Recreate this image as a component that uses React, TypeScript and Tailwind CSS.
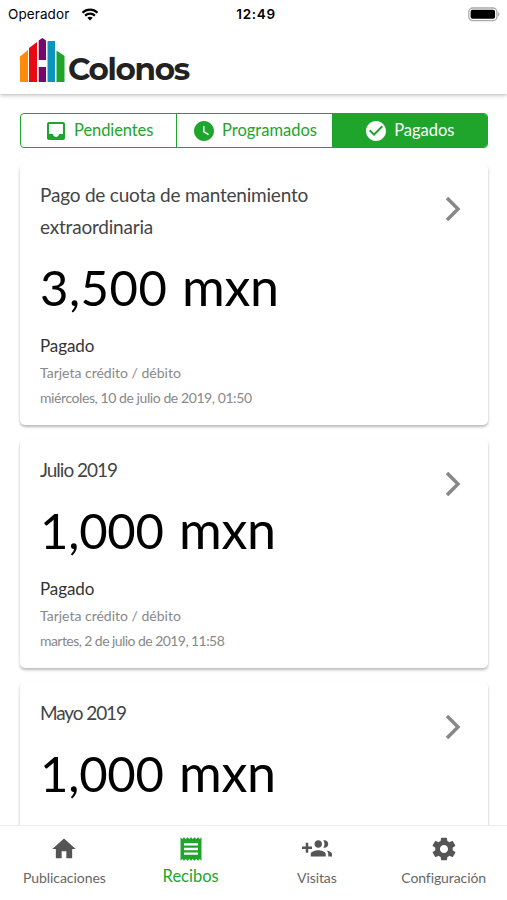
import React from "react";
import {
  MdCheckCircle,
  MdHome,
  MdInbox,
  MdReceipt,
  MdWatchLater,
} from "react-icons/md";
import { IoMdSettings } from "react-icons/io";

type Receipt = {
  title: string;
  titleClass: string;
  amount: string;
  amountClass: string;
  date?: string;
  dateClass?: string;
};

const receipts: Receipt[] = [
  {
    title: "Pago de cuota de mantenimiento extraordinaria",
    titleClass: "tracking-[-0.2px]",
    amount: "3,500",
    amountClass: "w-[142px] tracking-[0.5px]",
    date: "miércoles, 10 de julio de 2019, 01:50",
    dateClass: "tracking-[-0.42px]",
  },
  {
    title: "Julio 2019",
    titleClass: "tracking-[-1px]",
    amount: "1,000",
    amountClass: "w-[139px] tracking-[-0.2px]",
    date: "martes, 2 de julio de 2019, 11:58",
    dateClass: "tracking-[-0.56px]",
  },
  {
    title: "Mayo 2019",
    titleClass: "tracking-[-1.1px]",
    amount: "1,000",
    amountClass: "w-[139px] tracking-[-0.2px]",
  },
];

function StatusBar() {
  return (
    <div className="grid h-7 grid-cols-3 items-center pl-2 pr-[7px] text-black">
      <div className="flex items-center gap-[7px] font-[Inter,sans-serif] text-[13.5px]">
        <span className="w-[66px] tracking-[0.1px]">Operador</span>
        <svg width="18" height="13" viewBox="0 0 17 13" fill="none" stroke="black" strokeWidth="2.2">
          <path d="M1 4.7C5.2.5 11.8.5 16 4.7" />
          <path d="M3.6 7.6c2.8-2.7 7-2.7 9.8 0" />
          <path d="M8.5 12.5 5.8 9.8c1.5-1.3 3.9-1.3 5.4 0z" fill="black" stroke="none" />
        </svg>
      </div>
      <span className="pl-1 text-center font-[Inter,sans-serif] text-[13.5px] font-semibold tracking-[0.7px]">
        12:49
      </span>
      <svg className="justify-self-end" width="32" height="15" viewBox="0 0 33 15">
        <rect x="0.8" y="0.8" width="29" height="13" rx="4" fill="white" stroke="#aaa" strokeWidth="1.3" />
        <rect x="2.7" y="2.7" width="25.2" height="9.2" rx="2" />
        <path d="M31 5v4.5c2-.8 2-3.7 0-4.5z" fill="#aaa" />
      </svg>
    </div>
  );
}

function Logo() {
  return (
    <div className="flex items-end">
      <svg width="45" height="44" viewBox="0 0 45 44">
        <path d="M0 18.5 8 12v32H0z" fill="#ff8a0c" />
        <path d="M9 10 17 4v40H9z" fill="#e90912" />
        <path d="M18.7 2.5 22.3 0 26 2.5V22h-7.3zM18.7 29H26v15h-7.3z" fill="#77066d" />
        <path d="M27.5 3H35v41h-7.5z" fill="#0c94bd" />
        <path d="M36.5 12.5 44.5 18v26h-8z" fill="#20a52c" />
      </svg>
      <span className="-mb-0.5 ml-[3px] font-[Montserrat,Inter,sans-serif] text-[31px] font-bold leading-[30px] tracking-[-1.3px] text-[#222]">
        Colonos
      </span>
    </div>
  );
}

function Filters() {
  return (
    <div className="grid h-[35px] shrink-0 grid-cols-3 overflow-hidden rounded-[4px] border border-[#20a52c] text-[16.5px] text-[#20a52c]">
      <button className="flex items-center justify-center gap-1.5">
        <MdInbox size={24} />
        <span className="pb-px tracking-[-0.1px]">Pendientes</span>
      </button>
      <button className="flex items-center justify-center gap-1.5 border-l border-[#20a52c]">
        <MdWatchLater size={24} />
        <span className="pb-px">Programados</span>
      </button>
      <button className="flex items-center justify-center gap-1.5 bg-[#20a52c] text-white">
        <MdCheckCircle size={24} />
        <span className="pb-px">Pagados</span>
      </button>
    </div>
  );
}

function ReceiptCard({ title, titleClass, amount, amountClass, date, dateClass }: Receipt) {
  return (
    <article className="flex min-h-[229px] shrink-0 justify-between rounded-[5px] bg-white px-5 pb-[15px] pt-[15px] shadow-[0_2px_3px_rgba(0,0,0,0.28)]">
      <div>
        <h2 className={`w-[300px] text-[19px] leading-8 text-[#444] ${titleClass}`}>{title}</h2>
        <p className="mt-2 flex h-[72px] items-baseline whitespace-nowrap text-[49px] leading-[70px] text-black">
          <span className={amountClass}>{amount}</span>
          <span className="text-[52px] tracking-[-0.3px]">mxn</span>
        </p>
        {date && (
          <>
            <p className="mt-[9px] text-[17px] leading-7 tracking-[-0.1px] text-[#333]">Pagado</p>
            <p className="text-[14px] leading-[25px] text-[#888]">Tarjeta crédito / débito</p>
            <p className={`text-[14px] leading-[25px] text-[#888] ${dateClass}`}>{date}</p>
          </>
        )}
      </div>
      <svg className="mr-[7px] mt-[17px]" width="16" height="26" viewBox="0 0 16 26" fill="none" stroke="#888" strokeWidth="3.5">
        <path d="m2 2 11 11L2 24" />
      </svg>
    </article>
  );
}

function TabBar() {
  return (
    <nav className="z-10 grid h-[75px] shrink-0 grid-cols-4 border-t border-[#eee] bg-white text-[14px] text-[#666]">
      <a className="flex flex-col items-center pl-0.5 pt-[9px]">
        <MdHome size={28} className="text-[#555]" />
        <span className="mt-1 tracking-[-0.05px]">Publicaciones</span>
      </a>
      <a className="flex flex-col items-center pl-px pt-[9px] text-[16.5px] text-[#20a52c]">
        <MdReceipt size={28} />
        <span className="mt-px">Recibos</span>
      </a>
      <a className="flex flex-col items-center pt-[8px]">
        <svg className="text-[#555]" width="30" height="30" viewBox="0 0 24 24" fill="currentColor">
          <path d="M8 10H5V7H3v3H0v2h3v3h2v-3h3v-2zm10 1c1.66 0 2.99-1.34 2.99-3S19.66 5 18 5c-.32 0-.63.05-.91.14.57.81.9 1.79.9 2.86s-.34 2.04-.9 2.86c.28.09.59.14.91.14zm-5 0c1.66 0 2.99-1.34 2.99-3S14.66 5 13 5s-3 1.34-3 3 1.34 3 3 3zm6.62 2.16c.83.73 1.38 1.66 1.38 2.84v2h3v-2c0-1.54-2.37-2.49-4.38-2.84zM13 13c-2 0-6 1-6 3v2h12v-2c0-2-4-3-6-3z" />
        </svg>
        <span className="mt-[3px] tracking-[-0.1px]">Visitas</span>
      </a>
      <a className="flex flex-col items-center pt-[9px]">
        <IoMdSettings size={28} className="text-[#555]" />
        <span className="mt-1 tracking-[-0.1px]">Configuración</span>
      </a>
    </nav>
  );
}

export default function App() {
  return (
    <div className="flex h-[900px] w-[507px] flex-col overflow-hidden bg-white font-[Lato,sans-serif]">
      <header className="z-10 h-[94px] shrink-0 bg-white shadow-[0_1px_4px_rgba(0,0,0,0.3)]">
        <StatusBar />
        <div className="px-5 pt-2.5">
          <Logo />
        </div>
      </header>
      <main className="flex min-h-0 flex-1 flex-col overflow-hidden pl-5 pr-[19px] pt-[19px]">
        <Filters />
        <div className="mt-4 flex flex-col gap-[14px]">
          {receipts.map((receipt) => (
            <ReceiptCard key={receipt.title} {...receipt} />
          ))}
        </div>
      </main>
      <TabBar />
    </div>
  );
}
